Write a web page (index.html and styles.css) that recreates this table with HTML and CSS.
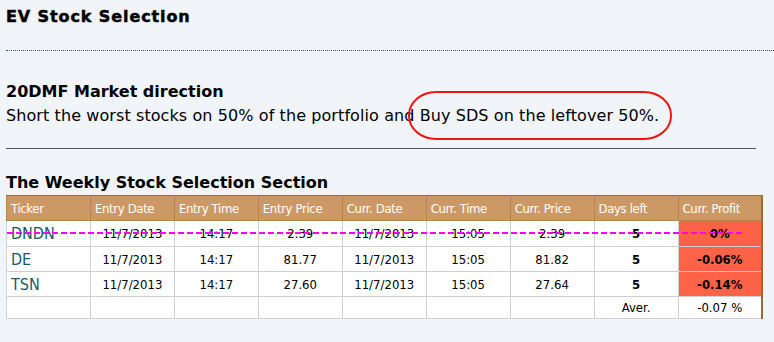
FILE: index.html
```html
<!DOCTYPE html>
<html>
<head>
<meta charset="utf-8">
<title>EV Stock Selection</title>
<link rel="stylesheet" href="styles.css">
</head>
<body>
<div class="page">
  <h1 class="title">EV Stock Selection</h1>
  <div class="rule-dotted"></div>
  <h2 class="heading">20DMF Market direction</h2>
  <p class="lead">Short the worst stocks on 50% of the portfolio and Buy SDS on the leftover 50%.</p>
  <div class="rule-solid"></div>
  <h2 class="heading section-title">The Weekly Stock Selection Section</h2>
  <table class="stocks">
    <thead>
      <tr class="hdr">
        <th>Ticker</th><th>Entry Date</th><th>Entry Time</th><th>Entry Price</th><th>Curr. Date</th><th>Curr. Time</th><th>Curr. Price</th><th>Days left</th><th>Curr. Profit</th>
      </tr>
    </thead>
    <tbody>
      <tr class="row first">
        <td class="tkr">DNDN</td><td>11/7/2013</td><td>14:17</td><td>2.39</td><td>11/7/2013</td><td>15:05</td><td>2.39</td><td class="days">5</td><td class="profit">0%</td>
      </tr>
      <tr class="row">
        <td class="tkr">DE</td><td>11/7/2013</td><td>14:17</td><td>81.77</td><td>11/7/2013</td><td>15:05</td><td>81.82</td><td class="days">5</td><td class="profit">-0.06%</td>
      </tr>
      <tr class="row">
        <td class="tkr">TSN</td><td>11/7/2013</td><td>14:17</td><td>27.60</td><td>11/7/2013</td><td>15:05</td><td>27.64</td><td class="days">5</td><td class="profit">-0.14%</td>
      </tr>
      <tr class="row last">
        <td></td><td></td><td></td><td></td><td></td><td></td><td></td><td class="avg">Aver.</td><td class="avg">-0.07 %</td>
      </tr>
    </tbody>
  </table>
  <div class="mark-ellipse"></div>
  <div class="mark-strike"></div>
</div>
</body>
</html>
```
FILE: styles.css
```css
html, body {
  margin: 0;
  padding: 0;
}
body {
  background: #F1F4F8;
  color: #000;
  font-family: "DejaVu Sans", sans-serif;
}
.page {
  position: relative;
  padding: 7px 0 0 6px;
}
.title {
  margin: 0;
  font-weight: bold;
  font-size: 16px;
  letter-spacing: 0.9px;
  line-height: 20px;
  -webkit-text-stroke: 0.5px #000;
}
.rule-dotted {
  margin-top: 23px;
  border-top: 1px dotted #3e5070;
  height: 0;
}
.heading {
  margin: 31px 0 0;
  font-size: 16px;
  line-height: 20px;
  font-weight: bold;
}
.lead {
  margin: 4px 0 0;
  font-size: 16px;
  line-height: 20px;
  letter-spacing: 0.09px;
}
.rule-solid {
  margin-top: 22px;
  width: 750px;
  border-top: 1px solid #555;
  height: 0;
}
.section-title {
  margin-top: 24px;
}
.stocks {
  margin-top: 2px;
  width: 757px;
  table-layout: fixed;
  border-collapse: collapse;
  border: 1px solid #9c6a3a;
  border-right-width: 2px;
  background: #fff;
  font-family: "DejaVu Sans Condensed", "DejaVu Sans", sans-serif;
  font-stretch: condensed;
}
.stocks th {
  background: #CC9966;
  color: #fff;
  font-weight: normal;
  font-size: 13px;
  letter-spacing: -0.35px;
  text-align: left;
  padding: 0 0 0 4px;
  border: 1px solid #b8844f;
  border-top-color: #9c6a3a;
}
.stocks td {
  border: 1px solid #d0d0d0;
  font-size: 13px;
  text-align: center;
  padding: 0;
}
.hdr { height: 25px; }
.row { height: 25px; }
.row.first { height: 26px; }
.row.last { height: 22px; }
.stocks td.tkr {
  text-align: left;
  padding-left: 4px;
  font-size: 16px;
  color: #1a5a6a;
}
.stocks td.days { font-weight: bold; }
.stocks td.profit {
  font-weight: bold;
  background: #FF6347;
}
.mark-ellipse {
  position: absolute;
  left: 408px;
  top: 91px;
  width: 264px;
  height: 49px;
  box-sizing: border-box;
  border: 2px solid #ee1515;
  border-radius: 28px / 24px;
}
.mark-strike {
  position: absolute;
  left: 7px;
  top: 232px;
  width: 736px;
  height: 2px;
  background: repeating-linear-gradient(90deg, #ff00ff 0 6px, transparent 6px 9px);
}
```
